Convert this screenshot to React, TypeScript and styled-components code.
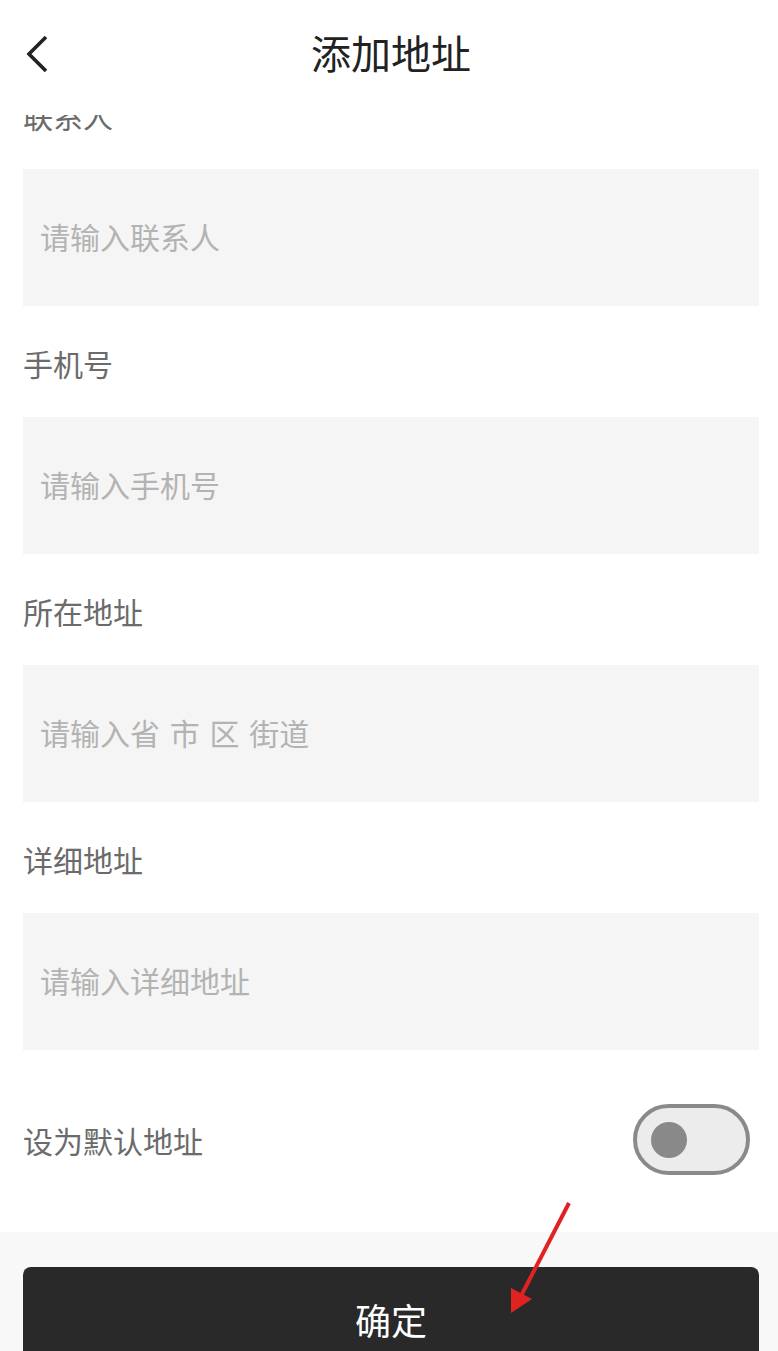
import React from "react";
import styled, { createGlobalStyle } from "styled-components";

const GlobalStyle = createGlobalStyle`
  html, body {
    margin: 0;
    padding: 0;
    background: #ffffff;
  }
  body {
    font-family: "Noto Sans CJK SC", "Noto Sans", sans-serif;
  }
  * { box-sizing: border-box; }
`;

const Page = styled.div`
  position: relative;
  width: 778px;
  height: 1351px;
  overflow: hidden;
  background: #ffffff;
  display: flex;
  flex-direction: column;
`;

const Header = styled.header`
  position: absolute;
  top: 0;
  left: 0;
  right: 0;
  height: 115px;
  background: #ffffff;
  z-index: 2;
  display: flex;
  align-items: flex-start;
  justify-content: center;
  padding-top: 24px;
  padding-left: 4px;
`;

const BackButton = styled.button`
  position: absolute;
  left: 22px;
  top: 31px;
  width: 34px;
  height: 46px;
  padding: 0;
  border: none;
  background: transparent;
  display: flex;
  align-items: center;
  justify-content: center;
`;

const Title = styled.h1`
  margin: 0;
  font-size: 40px;
  line-height: 56px;
  font-weight: 400;
  color: #222222;
`;

const Form = styled.div`
  display: flex;
  flex-direction: column;
  gap: 44px;
  padding: 102px 19px 0 23px;
`;

const Field = styled.div`
  display: flex;
  flex-direction: column;
  gap: 41px;
`;

const Label = styled.div`
  font-size: 30px;
  line-height: 26px;
  color: #6b6b6b;
  white-space: pre;
`;

const InputBox = styled.div`
  height: 137px;
  background: #f5f5f5;
  display: flex;
  align-items: center;
  padding: 0 0 4px 17px;
`;

const Placeholder = styled.span`
  font-size: 30px;
  line-height: 30px;
  color: #b3b3b3;
  white-space: pre;
  word-spacing: 3px;
`;

const ToggleRow = styled.div`
  display: flex;
  align-items: center;
  justify-content: space-between;
  height: 71px;
  margin: 54px 28px 0 23px;
`;

const Switch = styled.div`
  width: 117px;
  height: 71px;
  border-radius: 36px;
  border: 4px solid #8a8a8a;
  background: #ececec;
  display: flex;
  align-items: center;
  padding-left: 14px;
`;

const Knob = styled.div`
  width: 36px;
  height: 36px;
  border-radius: 50%;
  background: #898989;
`;

const Footer = styled.div`
  margin-top: 57px;
  flex: 1;
  background: #f8f8f8;
  padding: 35px 19px 0 23px;
`;

const ConfirmButton = styled.button`
  width: 100%;
  height: 110px;
  border: none;
  border-radius: 8px;
  background: #292929;
  color: #ffffff;
  font-family: "Noto Sans CJK SC", "Noto Sans", sans-serif;
  font-size: 36px;
  line-height: 40px;
  display: flex;
  justify-content: center;
  align-items: flex-start;
  padding-top: 32px;
`;

const Arrow = styled.svg`
  position: absolute;
  left: 0;
  top: 0;
  pointer-events: none;
  z-index: 3;
`;

const fields = [
  { label: "联系人", placeholder: "请输入联系人" },
  { label: "手机号", placeholder: "请输入手机号" },
  { label: "所在地址", placeholder: "请输入省 市 区 街道" },
  { label: "详细地址", placeholder: "请输入详细地址" },
];

export default function App() {
  return (
    <>
      <GlobalStyle />
      <Page>
        <Header>
          <BackButton aria-label="返回">
            <svg width="34" height="46" viewBox="0 0 34 46">
              <polyline
                points="24,6 7,23 24,40"
                fill="none"
                stroke="#222"
                strokeWidth="3.6"
                strokeLinecap="butt"
                strokeLinejoin="miter"
              />
            </svg>
          </BackButton>
          <Title>添加地址</Title>
        </Header>
        <Form>
          {fields.map((f) => (
            <Field key={f.label}>
              <Label>{f.label}</Label>
              <InputBox>
                <Placeholder>{f.placeholder}</Placeholder>
              </InputBox>
            </Field>
          ))}
        </Form>
        <ToggleRow>
          <Label>设为默认地址</Label>
          <Switch>
            <Knob />
          </Switch>
        </ToggleRow>
        <Footer>
          <ConfirmButton>确定</ConfirmButton>
        </Footer>
        <Arrow width="778" height="1351" viewBox="0 0 778 1351">
          <line x1="569" y1="1203" x2="521" y2="1296" stroke="#e02222" strokeWidth="4" />
          <polygon points="511,1313 511,1288 532,1299" fill="#e02222" />
        </Arrow>
      </Page>
    </>
  );
}
